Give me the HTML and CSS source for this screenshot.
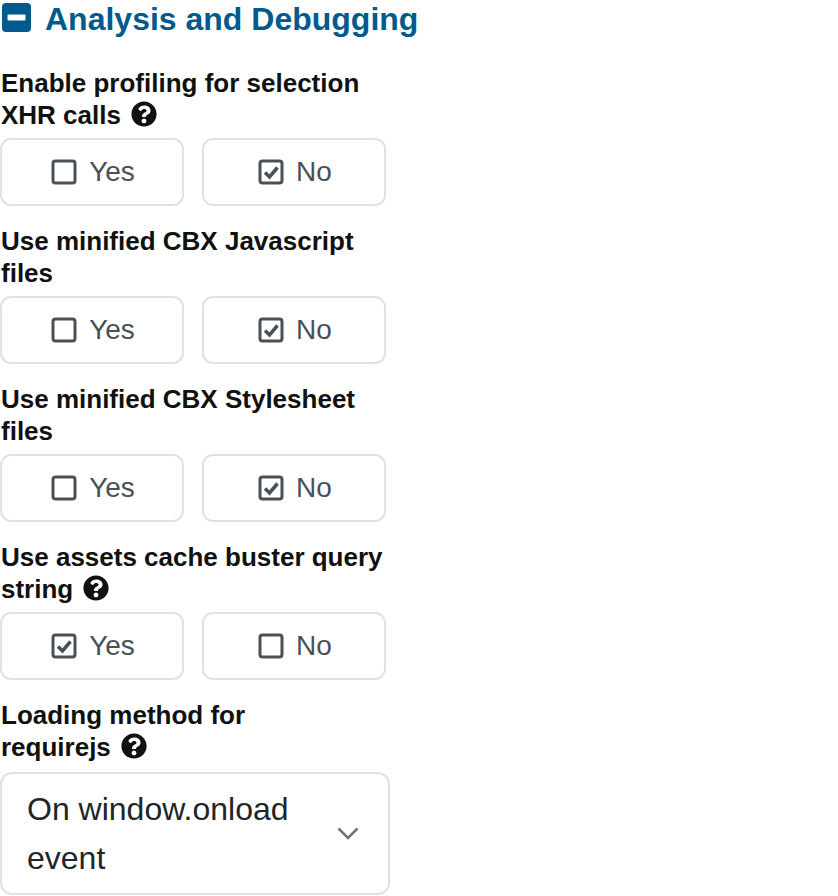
FILE: index.html
```html
<!DOCTYPE html>
<html lang="en">
<head>
    <meta charset="UTF-8">
    <title>Analysis and Debugging</title>
    <link rel="stylesheet" href="styles.css">
</head>
<body>
    <svg class="defs" width="0" height="0">
        <symbol id="help" viewBox="0 0 512 512">
            <path d="M504 256c0 137-111 248-248 248S8 393 8 256 119 8 256 8s248 111 248 248zM263 90c-54 0-89 23-116 63-4 5-3 12 3 16l35 26c5 4 13 3 17-2 18-23 30-36 58-36 21 0 46 13 46 33 0 15-12 23-33 34-23 14-55 31-55 73v7c0 7 5 12 12 12h56c7 0 12-5 12-12v-4c0-30 87-31 87-111 0-60-62-99-122-99zm-7 256c-26 0-47 21-47 47s21 47 47 47 47-21 47-47-21-47-47-47z"/>
        </symbol>
    </svg>

    <h2 class="section-title">
        <svg class="minus-icon" viewBox="0 0 29 29"><rect width="29" height="29" rx="4" fill="#005a8c"/><rect x="5.5" y="11.5" width="18" height="6" rx="1" fill="#fff"/></svg>
        Analysis and Debugging
    </h2>

    <div class="field">
        <div class="field-label">Enable profiling for selection XHR calls <svg class="help-icon"><use href="#help"/></svg></div>
        <div class="choices">
            <div class="choice"><svg class="check" viewBox="0 0 26 26"><rect x="2" y="2" width="22" height="22" rx="2.5"/></svg>Yes</div>
            <div class="choice"><svg class="check" viewBox="0 0 26 26"><rect x="2" y="2" width="22" height="22" rx="2.5"/><path d="M7 13.5l4.5 4.5 8-9.5"/></svg>No</div>
        </div>
    </div>

    <div class="field">
        <div class="field-label">Use minified CBX Javascript files</div>
        <div class="choices">
            <div class="choice"><svg class="check" viewBox="0 0 26 26"><rect x="2" y="2" width="22" height="22" rx="2.5"/></svg>Yes</div>
            <div class="choice"><svg class="check" viewBox="0 0 26 26"><rect x="2" y="2" width="22" height="22" rx="2.5"/><path d="M7 13.5l4.5 4.5 8-9.5"/></svg>No</div>
        </div>
    </div>

    <div class="field">
        <div class="field-label">Use minified CBX Stylesheet files</div>
        <div class="choices">
            <div class="choice"><svg class="check" viewBox="0 0 26 26"><rect x="2" y="2" width="22" height="22" rx="2.5"/></svg>Yes</div>
            <div class="choice"><svg class="check" viewBox="0 0 26 26"><rect x="2" y="2" width="22" height="22" rx="2.5"/><path d="M7 13.5l4.5 4.5 8-9.5"/></svg>No</div>
        </div>
    </div>

    <div class="field">
        <div class="field-label">Use assets cache buster query string <svg class="help-icon"><use href="#help"/></svg></div>
        <div class="choices">
            <div class="choice"><svg class="check" viewBox="0 0 26 26"><rect x="2" y="2" width="22" height="22" rx="2.5"/><path d="M7 13.5l4.5 4.5 8-9.5"/></svg>Yes</div>
            <div class="choice"><svg class="check" viewBox="0 0 26 26"><rect x="2" y="2" width="22" height="22" rx="2.5"/></svg>No</div>
        </div>
    </div>

    <div class="field">
        <div class="field-label narrow">Loading method for requirejs <svg class="help-icon"><use href="#help"/></svg></div>
        <div class="select">
            <span class="select-text">On window.onload event</span>
            <svg class="chevron" viewBox="0 0 22 13"><path d="M1.5 1.5l9.5 9.5 9.5-9.5"/></svg>
        </div>
    </div>
</body>
</html>
```

FILE: styles.css
```css
html {
    height: 896px;
    overflow: hidden;
}
body {
    font-family: 'Liberation Sans', Arial, sans-serif;
    background-color: #fff;
    margin: 0;
    padding: 0;
    height: 896px;
    overflow: hidden;
}
.defs {
    display: none;
}
.section-title {
    display: flex;
    align-items: center;
    gap: 14px;
    margin: 0 0 29px 2px;
    height: 38px;
    font-size: 32px;
    line-height: 38px;
    font-weight: bold;
    color: #005a8c;
}
.minus-icon {
    width: 29px;
    height: 29px;
    margin-bottom: 3px;
    flex-shrink: 0;
}
.field {
    width: 386px;
    margin-bottom: 19px;
}
.field-label {
    width: 386px;
    font-size: 26px;
    line-height: 32px;
    font-weight: bold;
    color: #111;
    margin-left: 1px;
    margin-bottom: 7px;
}
.field-label.narrow {
    width: 300px;
    margin-bottom: 9px;
}
.help-icon {
    width: 26px;
    height: 26px;
    margin-left: 3px;
    vertical-align: -3px;
    fill: #111;
}
.choices {
    display: flex;
    gap: 18px;
}
.choice {
    flex: 1;
    height: 68px;
    box-sizing: border-box;
    display: flex;
    align-items: center;
    justify-content: center;
    gap: 12px;
    padding-left: 2px;
    border: 2px solid #dee2e6;
    border-radius: 11px;
    font-size: 28px;
    color: #495057;
}
.check {
    width: 26px;
    height: 26px;
    fill: none;
    stroke: #495057;
    stroke-width: 3;
}
.check path {
    stroke-width: 3.5;
}
.select {
    width: 390px;
    height: 123px;
    box-sizing: border-box;
    display: flex;
    align-items: center;
    justify-content: space-between;
    padding: 0 29px 0 25px;
    border: 2px solid #dee2e6;
    border-radius: 12px;
    font-size: 32px;
    line-height: 49px;
    color: #212529;
}
.select-text {
    width: 280px;
}
.chevron {
    width: 22px;
    height: 13px;
    fill: none;
    stroke: #6c757d;
    stroke-width: 2.5;
    flex-shrink: 0;
}
```
